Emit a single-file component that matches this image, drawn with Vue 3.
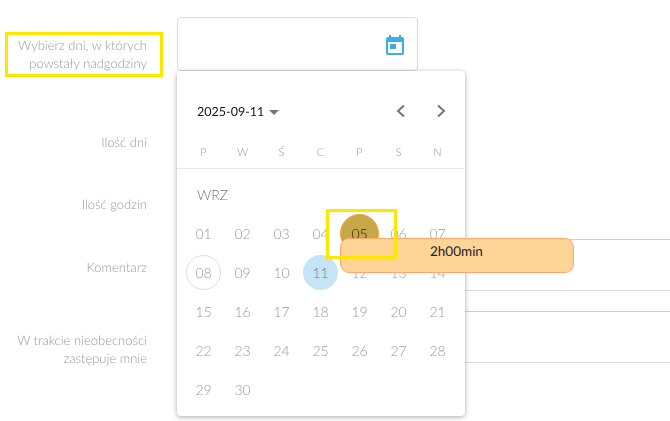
<script setup>
const weekdays = ['P', 'W', 'Ś', 'C', 'P', 'S', 'N']
const days = Array.from({ length: 30 }, (_, i) => String(i + 1).padStart(2, '0'))
const dayClass = (d) => ({ marked: d === '05', start: d === '08', today: d === '11' })
</script>

<template>
  <div class="page">
    <form class="form">
      <div class="row row-date">
        <label class="label">Wybierz dni, w których<br />powstały nadgodziny</label>
        <div class="date-field">
          <div class="date-input">
            <svg class="cal" viewBox="0 0 18 20" width="18" height="20" aria-hidden="true">
              <path fill="#3daee3" d="M3 0h2v2h8V0h2v2h1a2 2 0 0 1 2 2v14a2 2 0 0 1-2 2H2a2 2 0 0 1-2-2V4a2 2 0 0 1 2-2h1zM2 7v10.500a.5.5 0 0 0 .5.5h13a.5.5 0 0 0 .5-.5V7z" />
              <rect x="4" y="9" width="6" height="5" fill="#3daee3" />
            </svg>
          </div>
          <div class="popup">
            <div class="head">
              <span class="current">2025-09-11</span>
              <span class="caret"></span>
              <span class="arrows">
                <svg viewBox="0 0 12 14" width="12" height="14"><path d="M10 1.500 4 7l6 5.500" fill="none" stroke="#757575" stroke-width="2" /></svg>
                <svg viewBox="0 0 12 14" width="12" height="14"><path d="M2 1.500 8 7l-6 5.500" fill="none" stroke="#757575" stroke-width="2" /></svg>
              </span>
            </div>
            <div class="weekdays">
              <span v-for="(w, i) in weekdays" :key="i">{{ w }}</span>
            </div>
            <div class="month">WRZ</div>
            <div class="days">
              <span v-for="d in days" :key="d" class="day" :class="dayClass(d)">{{ d }}</span>
            </div>
          </div>
        </div>
      </div>
      <div class="row row-days"><label class="label">Ilość dni</label></div>
      <div class="row row-hours"><label class="label">Ilość godzin</label></div>
      <div class="row row-comment">
        <label class="label">Komentarz</label>
        <div class="box"></div>
      </div>
      <div class="row row-sub">
        <label class="label">W trakcie nieobecności<br />zastępuje mnie</label>
        <div class="box"></div>
      </div>
    </form>
    <div class="tip"><span>2h00min</span></div>
    <div class="mark mark-label"></div>
    <div class="mark mark-day"></div>
  </div>
</template>

<style>
html, body { margin: 0; background: #fff; overflow: hidden; }
</style>

<style scoped>
.page {
  position: relative;
  width: 670px;
  height: 421px;
  overflow: hidden;
  background: #fff;
  font-family: Lato, "Open Sans", sans-serif;
  font-size: 13px;
  text-rendering: geometricPrecision;
}
.form { display: flex; flex-direction: column; padding-top: 17px; }
.row { display: grid; grid-template-columns: 147px 1fr; column-gap: 30px; box-sizing: border-box; }
.label { display: block; text-align: right; color: #999; line-height: 18px; font-weight: 300; will-change: transform; }
.row-date { height: 54px; }
.row-date .label { padding-top: 19px; }
.row-days { height: 124px; padding-top: 62px; }
.row-hours { height: 44px; }
.row-comment { height: 72px; }
.row-comment .label { padding-top: 19px; }
.row-sub .label { padding-top: 20px; }
.box {
  height: 52px;
  box-sizing: border-box;
  border-top: 1px solid #d0d0d0;
  border-bottom: 1px solid #dcdcdc;
}
.date-field { position: relative; }
.date-input {
  width: 241px;
  height: 54px;
  box-sizing: border-box;
  border: 1px solid #dcdcdc;
  border-radius: 4px;
  display: flex;
  align-items: center;
  justify-content: flex-end;
  padding-right: 13px;
}
.cal { display: block; margin-top: 1px; }
.popup {
  position: absolute;
  z-index: 2;
  left: 0;
  top: 54px;
  width: 288px;
  height: 345px;
  background: #fff;
  border-radius: 4px;
  box-shadow: 0 1px 5px rgba(0, 0, 0, .35);
}
.head { display: flex; align-items: center; height: 20px; padding: 30px 17px 0 20px; }
.current { color: #111; font-size: 12.5px; will-change: transform; }
.caret {
  width: 0;
  height: 0;
  margin: 2px 0 0 5px;
  border: 5px solid transparent;
  border-top: 5px solid #757575;
  border-bottom: 0;
}
.arrows { margin-left: auto; display: flex; gap: 30px; }
.arrows svg { display: block; }
.weekdays {
  display: grid;
  grid-template-columns: repeat(7, 39px);
  padding: 24px 0 0 7px;
  height: 23px;
  border-bottom: 1px solid #e6e6e6;
  color: #999;
  font-size: 11px;
  font-weight: 300;
  line-height: 16px;
  text-align: center;
  will-change: transform;
}
.month { color: #757575; font-size: 14px; font-weight: 300; line-height: 18px; padding: 17px 0 0 20px; will-change: transform; }
.days {
  display: grid;
  grid-template-columns: repeat(7, 39px);
  grid-auto-rows: 39px;
  padding: 10px 0 0 7px;
  will-change: transform;
}
.day {
  display: flex;
  align-items: center;
  justify-content: center;
  color: #999;
  font-size: 14px;
  font-weight: 300;
  position: relative;
  z-index: 0;
}
.marked::before, .start::before, .today::before {
  content: "";
  position: absolute;
  z-index: -1;
  border-radius: 50%;
  box-sizing: border-box;
}
.marked { color: #221a05; }
.marked::before { width: 39px; height: 39px; background: #c7a848; border: 1px solid #f5a623; }
.start::before { width: 35px; height: 35px; border: 1px solid #dcdcdc; }
.today { color: #6f7f8a; }
.today::before { width: 35px; height: 35px; background: #c5e5f6; }
.tip {
  position: absolute;
  z-index: 3;
  left: 340px;
  top: 238px;
  width: 234px;
  height: 35px;
  box-sizing: border-box;
  background: #ffd597;
  border: 1px solid #ffa76b;
  border-radius: 9px;
  padding: 4px 0 0 89px;
  color: #222;
  font-size: 13.5px;
  line-height: 16px;
}
.mark { position: absolute; z-index: 4; box-sizing: border-box; border: 3px solid #ffe600; }
.mark-label { left: 5px; top: 32px; width: 158px; height: 45px; }
.mark-day { left: 326px; top: 209px; width: 71px; height: 50px; }
</style>
